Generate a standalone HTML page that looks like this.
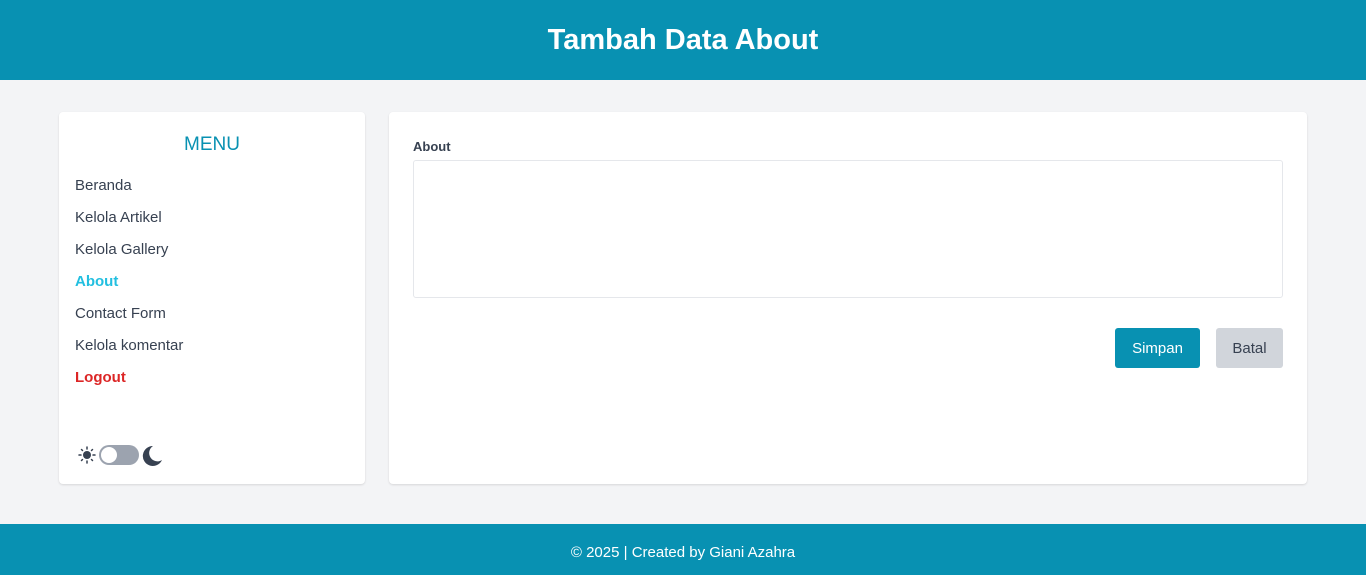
<!DOCTYPE html>
<html><head><meta charset="utf-8"><style>
*{box-sizing:border-box;margin:0;padding:0}
html,body{width:1366px;height:575px;overflow:hidden}
body{background:#f3f4f6;font-family:"Liberation Sans",sans-serif;position:relative;color:#374151}
header{position:absolute;left:0;top:0;width:1366px;height:80px;background:#0891b2;color:#fff;text-align:center;font-size:29px;font-weight:bold;line-height:80px}
.side{position:absolute;left:59px;top:112px;width:306px;height:372px;background:#fff;border-radius:4px;box-shadow:0 1px 2px rgba(0,0,0,.12)}
.side h2{text-align:center;color:#0891b2;font-size:19px;font-weight:normal;margin-top:22px;height:30px}
.side ul{list-style:none}
.side li{position:absolute;left:16px;font-size:15px;color:#374151}
.main{position:absolute;left:389px;top:112px;width:918px;height:372px;background:#fff;border-radius:4px;box-shadow:0 1px 2px rgba(0,0,0,.12)}
label{position:absolute;left:24px;top:27px;font-size:13px;font-weight:bold;color:#374151}
.ta{position:absolute;left:24px;top:48px;width:870px;height:138px;border:1px solid #e5e7eb;border-radius:3px}
.b1{position:absolute;left:726px;top:216px;width:85px;height:40px;background:#0891b2;color:#fff;border-radius:3px;font-size:15px;text-align:center;line-height:42px}
.b2{position:absolute;left:827px;top:216px;width:67px;height:40px;background:#d1d5db;color:#374151;border-radius:3px;font-size:15px;text-align:center;line-height:42px}
footer{position:absolute;left:0;top:524px;width:1366px;height:51px;background:#0891b2;color:#fff;text-align:center;font-size:15px;line-height:58px}
</style></head><body>
<header>Tambah Data About</header>
<div class="side">
<h2>MENU</h2>
<ul>
<li style="top:65px">Beranda</li>
<li style="top:97px">Kelola Artikel</li>
<li style="top:129px">Kelola Gallery</li>
<li style="top:161px;color:#22bfe0;font-weight:bold">About</li>
<li style="top:193px">Contact Form</li>
<li style="top:225px">Kelola komentar</li>
<li style="top:257px;color:#dc2626;font-weight:bold">Logout</li>
</ul>
<svg style="position:absolute;left:18px;top:333px" width="90" height="22" viewBox="0 0 90 22">
<g stroke="#374151" stroke-width="1.5" stroke-linecap="round"><line x1="10" y1="2" x2="10" y2="4"/><line x1="10" y1="16" x2="10" y2="18"/><line x1="2" y1="10" x2="4" y2="10"/><line x1="16" y1="10" x2="18" y2="10"/><line x1="4.5" y1="4.5" x2="5.5" y2="5.5"/><line x1="14.5" y1="14.5" x2="15.5" y2="15.5"/><line x1="4.5" y1="15.5" x2="5.5" y2="14.5"/><line x1="14.5" y1="5.5" x2="15.5" y2="4.5"/></g>
<circle cx="10" cy="10" r="4" fill="#374151"/>
<rect x="22" y="0" width="40" height="20" rx="10" fill="#9ca3af"/>
<circle cx="32" cy="10" r="8" fill="#fff"/>
<path d="M76 1a10 10 0 1 0 9 14 A8 8 0 0 1 76 1z" fill="#374151"/>
</svg>
</div>
<div class="main">
<label>About</label>
<div class="ta"></div>
<div class="b1">Simpan</div>
<div class="b2">Batal</div>
</div>
<footer>© 2025 | Created by Giani Azahra</footer>
</body></html>
